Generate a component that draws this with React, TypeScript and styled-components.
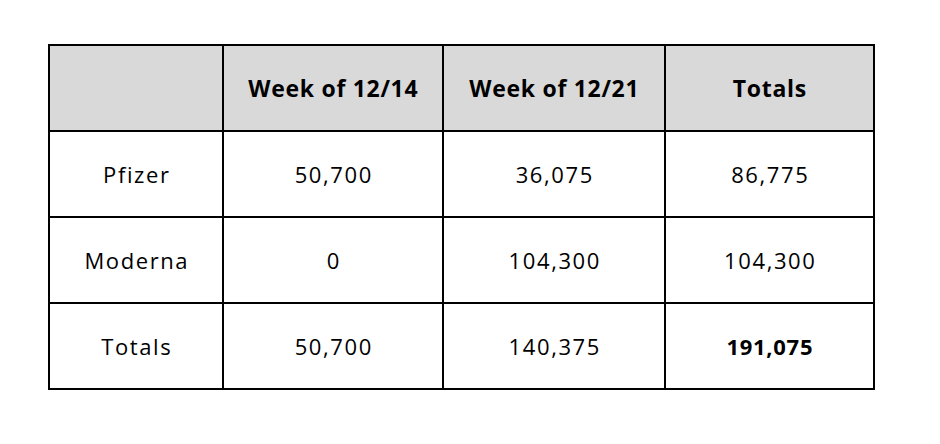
import { FC } from "react";
import styled, { createGlobalStyle } from "styled-components";

const GlobalStyle = createGlobalStyle`
  html, body {
    margin: 0;
    padding: 0;
    background: #ffffff;
  }
  body {
    font-family: "Open Sans", "Liberation Sans", sans-serif;
    color: #000000;
  }
`;

interface IRow {
  label: string;
  values: string[];
  strongLast?: boolean;
}

const headers = ["", "Week of 12/14", "Week of 12/21", "Totals"];
const widths = [174, 220, 222, 209];

const rows: IRow[] = [
  { label: "Pfizer", values: ["50,700", "36,075", "86,775"] },
  { label: "Moderna", values: ["0", "104,300", "104,300"] },
  { label: "Totals", values: ["50,700", "140,375", "191,075"], strongLast: true },
];

const App: FC = () => {
  return (
    <>
      <GlobalStyle />
      <Page>
        <Table>
          <colgroup>
            {widths.map((w, i) => (
              <col key={i} style={{ width: w }} />
            ))}
          </colgroup>
          <thead>
            <tr>
              {headers.map((h, i) => (
                <HeadCell key={i}>{h}</HeadCell>
              ))}
            </tr>
          </thead>
          <tbody>
            {rows.map((row) => (
              <tr key={row.label}>
                <Cell>{row.label}</Cell>
                {row.values.map((v, i) => (
                  <Cell
                    key={i}
                    $strong={row.strongLast && i === row.values.length - 1}
                  >
                    {v}
                  </Cell>
                ))}
              </tr>
            ))}
          </tbody>
        </Table>
      </Page>
    </>
  );
};

export default App;

const Page = styled.div`
  width: 940px;
  height: 444px;
  padding: 44px 0 0 48px;
  box-sizing: border-box;
`;

const Table = styled.table`
  border-collapse: collapse;
  table-layout: fixed;
  width: 825px;
  border: 2px solid #000;
`;

const HeadCell = styled.th`
  height: 84px;
  padding: 0 0 0 0.7px;
  background-color: #d9d9d9;
  border: 2px solid #000;
  font-size: 23px;
  font-weight: 700;
  letter-spacing: 0.7px;
  text-align: center;
  vertical-align: middle;
`;

const Cell = styled.td<{ $strong?: boolean }>`
  height: 84px;
  padding: 0 0 0 ${({ $strong }) => ($strong ? "0.7px" : "1.6px")};
  border: 2px solid #000;
  font-size: 22px;
  font-weight: ${({ $strong }) => ($strong ? 700 : 400)};
  letter-spacing: ${({ $strong }) => ($strong ? "0.7px" : "1.6px")};
  text-align: center;
  vertical-align: middle;
`;
